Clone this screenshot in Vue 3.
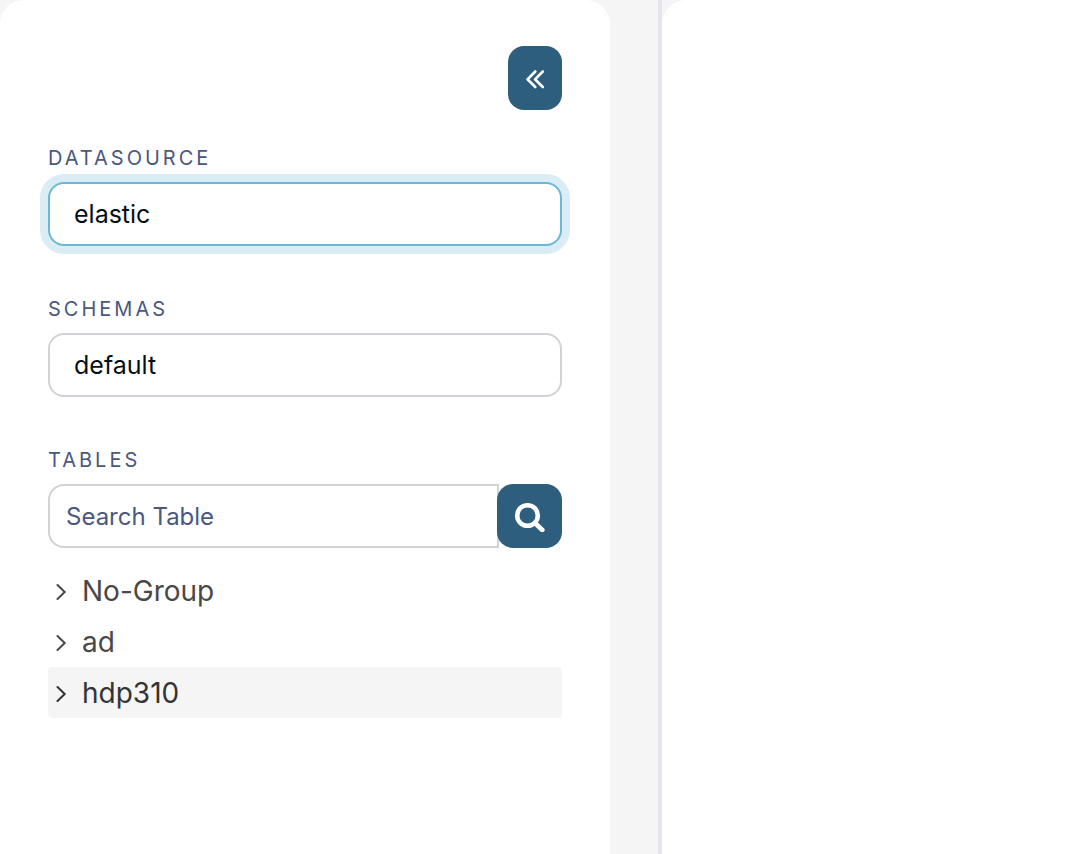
<script setup>
import { ref } from 'vue'

const datasource = ref('elastic')
const schema = ref('default')
const search = ref('')
const groups = [
  { name: 'No-Group', active: false },
  { name: 'ad', active: false },
  { name: 'hdp310', active: true },
]
</script>

<template>
  <div class="layout">
    <div class="pane">
      <aside class="sidebar">
        <button class="btn collapse" type="button" aria-label="Collapse sidebar">
          <svg width="20" height="20" viewBox="0 0 20 20" fill="none" stroke="currentColor" stroke-width="2.6" stroke-linecap="round" stroke-linejoin="round">
            <path d="M10.300 2.500L2.500 10.300L10.300 18M17.800 2.500L10 10.300L17.800 18" />
          </svg>
        </button>

        <div class="field">
          <label for="datasource">DATASOURCE</label>
          <select id="datasource" v-model="datasource" class="control focused">
            <option>elastic</option>
          </select>
        </div>

        <div class="field">
          <label for="schema">SCHEMAS</label>
          <select id="schema" v-model="schema" class="control">
            <option>default</option>
          </select>
        </div>

        <div class="field">
          <label for="search">TABLES</label>
          <div class="search">
            <input id="search" v-model="search" class="control" type="text" placeholder="Search Table" />
            <button class="btn find" type="button" aria-label="Search">
              <svg width="32" height="32" viewBox="0 0 32 32" fill="none" stroke="currentColor" stroke-linecap="round">
                <circle cx="13.500" cy="15.500" r="10.300" stroke-width="4.600" />
                <path d="M22 24L28.300 30" stroke-width="4.600" />
              </svg>
            </button>
          </div>
        </div>

        <ul class="tree">
          <li v-for="group in groups" :key="group.name">
            <button class="node" :class="{ active: group.active }" type="button" aria-expanded="false">
              <svg width="12" height="18" viewBox="0 0 12 18" fill="none" stroke="currentColor" stroke-width="2" stroke-linecap="round" stroke-linejoin="miter">
                <path d="M1.500 3L8.700 10L1.500 17" />
              </svg>
              <span>{{ group.name }}</span>
            </button>
          </li>
        </ul>
      </aside>
    </div>
    <div class="divider"></div>
    <div class="workspace">
      <main class="content"></main>
    </div>
  </div>
</template>

<style>
body {
  margin: 0;
}
</style>

<style scoped>
.layout {
  display: flex;
  min-height: 100vh;
  background: #f5f5f5;
  font-family: Inter, "Liberation Sans", sans-serif;
}
.pane {
  box-sizing: border-box;
  width: 658px;
  max-width: 62%;
  padding-right: 48px;
  display: flex;
}
.sidebar {
  flex: 1;
  min-width: 0;
  box-sizing: border-box;
  padding: 46px 48px;
  background: #fff;
  border-radius: 24px 24px 0 0;
  display: flex;
  flex-direction: column;
}
.divider {
  flex: 0 0 4px;
  background: #e5e5eb;
}
.workspace {
  flex: 1;
  display: flex;
  background: #f4f4f8;
}
.content {
  flex: 1;
  background: #fff;
  border-radius: 24px 0 0 0;
}
.btn {
  display: flex;
  align-items: center;
  justify-content: center;
  height: 64px;
  padding: 0;
  border: 0;
  border-radius: 16px;
  background: #2e5e7e;
  color: #fff;
}
.collapse {
  width: 54px;
  align-self: flex-end;
  margin-bottom: 36px;
  padding-top: 2px;
}
.field {
  display: flex;
  flex-direction: column;
  margin-bottom: 51px;
}
.field label {
  margin-bottom: 12px;
  font-size: 20px;
  line-height: 24px;
  letter-spacing: 3px;
  color: #4a5880;
}
.control {
  box-sizing: border-box;
  width: 100%;
  height: 64px;
  margin: 0;
  padding: 0 24px;
  border: 2px solid #cfd3d8;
  border-radius: 16px;
  background: #fff;
  color: #060f18;
  font-family: inherit;
  font-size: 25px;
  appearance: none;
  outline: none;
}
.focused {
  border-color: #6bb8d5;
  box-shadow: 0 0 0 8px #daecf4;
}
.search {
  display: flex;
}
.search .control {
  flex: 1;
  min-width: 0;
  padding: 0 16px;
  border-radius: 16px 0 0 16px;
  font-size: 24px;
}
.search .control::placeholder {
  color: #4a5880;
  opacity: 1;
}
.find {
  position: relative;
  flex: 0 0 65px;
  margin-left: -2px;
}
.tree {
  list-style: none;
  margin: -34px 0 0;
  padding: 0;
}
.node {
  display: flex;
  align-items: center;
  gap: 14px;
  width: 100%;
  height: 51px;
  padding: 0 8px;
  border: 0;
  border-radius: 4px;
  background: none;
  color: #484848;
  font-family: inherit;
  font-size: 28px;
  text-align: left;
}
.node.active {
  background: #f5f5f5;
  color: #343434;
}
</style>
